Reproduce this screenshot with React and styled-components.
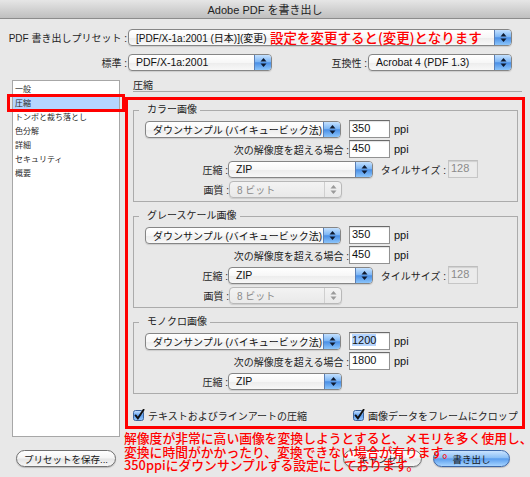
import React from "react";
import styled, { createGlobalStyle } from "styled-components";

const UI = `"Liberation Sans", "Noto Sans CJK JP", sans-serif`;
const JP = `"Noto Sans CJK JP", "Liberation Sans", sans-serif`;

const Global = createGlobalStyle`
  html, body { margin: 0; padding: 0; background: #e8e8e8; }
  body { font-family: ${UI}; }
`;

const Window = styled.div`
  position: relative;
  width: 530px;
  height: 477px;
  overflow: hidden;
  background: #e8e8e8;
  display: flex;
  flex-direction: column;
  font-family: ${UI};
  color: #1a1a1a;
`;

const TitleBar = styled.div`
  height: 19px;
  flex-shrink: 0;
  box-sizing: border-box;
  background: linear-gradient(#e6e6e6, #bfbfbf);
  border-bottom: 1px solid #8c8c8c;
  display: flex;
  align-items: center;
  justify-content: center;
  font-size: 11px;
  color: #222;
`;

const FormRow = styled.div`
  display: flex;
  align-items: center;
  height: 18px;
  margin-top: ${(p) => p.$mt}px;
  flex-shrink: 0;
`;

const Label = styled.span`
  width: ${(p) => p.$w}px;
  flex-shrink: 0;
  text-align: right;
  font-size: 10px;
  white-space: nowrap;
  color: #1e1e1e;
  margin-right: ${(p) => p.$mr || 0}px;
`;

const PopupBox = styled.div`
  display: flex;
  align-items: center;
  width: ${(p) => p.$w}px;
  height: 17px;
  flex-shrink: 0;
  box-sizing: border-box;
  border: 1px solid ${(p) => (p.$disabled ? "#b8b8b8" : "#858585")};
  border-radius: 4px;
  background: ${(p) =>
    p.$disabled
      ? "linear-gradient(#f3f3f3, #e9e9e9)"
      : "linear-gradient(#ffffff 0%, #f7f7f7 50%, #ececec 51%, #f8f8f8 100%)"};
  box-shadow: 0 1px 1px rgba(0, 0, 0, 0.12);
  overflow: hidden;
`;

const PopupText = styled.span`
  flex: 1;
  min-width: 0;
  padding-left: 7px;
  font-size: ${(p) => p.$size || 10.5}px;
  color: ${(p) => (p.$disabled ? "#8a8a8a" : "#111")};
  white-space: nowrap;
  overflow: hidden;
`;

const PopupArrows = styled.span`
  width: 16px;
  align-self: stretch;
  display: flex;
  align-items: center;
  justify-content: center;
  border-left: 1px solid ${(p) => (p.$disabled ? "#cfcfcf" : "#5a7fb6")};
  background: ${(p) =>
    p.$disabled
      ? "transparent"
      : "linear-gradient(#c4e1ff 0%, #7db6f5 45%, #4a8fe6 52%, #8cc5fb 100%)"};
`;

const Arrows = ({ color }) => (
  <svg width="7" height="11" viewBox="0 0 7 11">
    <path d="M0.5 4.5 L3.5 1 L6.5 4.5 Z" fill={color} />
    <path d="M0.5 6.5 L3.5 10 L6.5 6.5 Z" fill={color} />
  </svg>
);

const Popup = ({ w, children, size, disabled }) => (
  <PopupBox $w={w} $disabled={disabled}>
    <PopupText $size={size} $disabled={disabled}>
      {children}
    </PopupText>
    <PopupArrows $disabled={disabled}>
      <Arrows color={disabled ? "#9a9a9a" : "#0e1a30"} />
    </PopupArrows>
  </PopupBox>
);

const Field = styled.div`
  width: ${(p) => p.$w}px;
  height: 18px;
  flex-shrink: 0;
  box-sizing: border-box;
  border: 1px solid ${(p) => (p.$disabled ? "#c6c6c6" : "#929292")};
  border-top-color: ${(p) => (p.$disabled ? "#bdbdbd" : "#6a6a6a")};
  background: ${(p) => (p.$disabled ? "#ebebeb" : "#fff")};
  box-shadow: inset 0 1px 1px rgba(0, 0, 0, 0.12);
  font-size: 11px;
  line-height: 15px;
  padding: 0 2px;
  color: ${(p) => (p.$disabled ? "#8a8a8a" : "#111")};
  margin-left: ${(p) => p.$ml || 0}px;
`;

const Selected = styled.span`
  background: #b5d5ff;
`;

const Unit = styled.span`
  font-size: 11px;
  margin-left: 4px;
  color: #111;
`;

const Content = styled.div`
  display: flex;
  margin-top: 9px;
  height: 357px;
  flex-shrink: 0;
`;

const Sidebar = styled.div`
  width: 108px;
  margin-left: 12px;
  box-sizing: border-box;
  background: #fff;
  border: 1px solid #a7a7a7;
  padding-top: 1px;
  display: flex;
  flex-direction: column;
`;

const SideItem = styled.div`
  height: 14px;
  line-height: 14px;
  font-size: 8px;
  padding-left: 2px;
  font-family: ${JP};
  color: #2a2a2a;
  background: ${(p) => (p.$selected ? "#b5d5ff" : "transparent")};
`;

const Main = styled.div`
  width: 389px;
  margin-left: 13px;
  display: flex;
  flex-direction: column;
`;

const MainHeader = styled.div`
  height: 11px;
  line-height: 11px;
  font-size: 10px;
  border-bottom: 1px solid #a9a9a9;
  color: #222;
`;

const Group = styled.fieldset`
  margin: ${(p) => (p.$first ? 12 : 8)}px 4px 0 0;
  padding: 4px 0 3px 11px;
  border: 1px solid #ababab;
  min-width: 0;
  display: flex;
  flex-direction: column;
  gap: 2px;
`;

const Legend = styled.legend`
  margin-left: -6px;
  padding: 0 3px 0 8px;
  font-size: 10px;
  line-height: 12px;
  color: #222;
`;

const Row = styled.div`
  display: flex;
  align-items: center;
  height: 18px;
`;

const CheckRow = styled.div`
  display: flex;
  align-items: center;
  height: 14px;
  margin-top: 14px;
`;

const CheckItem = styled.label`
  display: flex;
  align-items: center;
  gap: 3px;
  width: ${(p) => (p.$w ? `${p.$w}px` : "auto")};
  font-size: 10px;
  color: #1e1e1e;
  white-space: nowrap;
`;

const CheckBox = () => (
  <svg width="12" height="12" viewBox="0 0 12 12">
    <defs>
      <linearGradient id="cbg" x1="0" y1="0" x2="0" y2="1">
        <stop offset="0" stopColor="#cde5ff" />
        <stop offset="0.5" stopColor="#5d9ff0" />
        <stop offset="1" stopColor="#98cafc" />
      </linearGradient>
    </defs>
    <rect x="0.5" y="1.5" width="10" height="10" rx="2" fill="url(#cbg)" stroke="#3e659c" />
    <path d="M2.6 6.4 L4.9 9.3 L10.6 0.8" stroke="#101010" strokeWidth="1.9" fill="none" strokeLinecap="round" />
  </svg>
);

const Footer = styled.div`
  display: flex;
  align-items: center;
  margin-top: 13px;
  padding: 0 20px 0 16px;
`;

const PushButton = styled.div`
  width: ${(p) => p.$w}px;
  height: 17px;
  box-sizing: border-box;
  border-radius: 9px;
  border: 1px solid ${(p) => (p.$primary ? "#3d67a8" : "#707070")};
  background: ${(p) =>
    p.$primary
      ? "linear-gradient(#c9e3ff 0%, #8cc0f6 45%, #5a9ded 52%, #a6d4ff 100%)"
      : "linear-gradient(#ffffff 0%, #f4f4f4 48%, #e4e4e4 52%, #f6f6f6 100%)"};
  box-shadow: 0 1px 1px rgba(0, 0, 0, 0.2);
  display: flex;
  align-items: center;
  justify-content: center;
  font-size: 9.5px;
  color: #151515;
  margin-left: ${(p) => (p.$auto ? "auto" : `${p.$ml || 0}px`)};
`;

const RedFrame = styled.div`
  position: absolute;
  left: ${(p) => p.$x}px;
  top: ${(p) => p.$y}px;
  width: ${(p) => p.$w}px;
  height: ${(p) => p.$h}px;
  box-sizing: border-box;
  border: 3px solid #ff0000;
  pointer-events: none;
`;

const RedNote = styled.div`
  position: absolute;
  left: ${(p) => p.$x}px;
  top: ${(p) => p.$y}px;
  font-family: ${JP};
  font-size: ${(p) => p.$size}px;
  line-height: ${(p) => p.$lh}px;
  font-weight: 500;
  color: #ff0000;
  white-space: nowrap;
`;

const DownsampleGroup = ({ title, first, res, over, selected, quality = true }) => (
  <Group $first={first}>
    <Legend>{title}</Legend>
    <Row>
      <Popup w={196} size={10}>ダウンサンプル (バイキュービック法)</Popup>
      <Field $w={41} $ml={8}>{selected ? <Selected>{res}</Selected> : res}</Field>
      <Unit>ppi</Unit>
    </Row>
    <Row>
      <Label $w={204}>次の解像度を超える場合 :</Label>
      <Field $w={41}>{over}</Field>
      <Unit>ppi</Unit>
    </Row>
    <Row>
      <Label $w={83}>圧縮 :</Label>
      <Popup w={quality ? 145 : 114}>ZIP</Popup>
      {quality && (
        <>
          <Label $w={73}>タイルサイズ :</Label>
          <Field $w={30} $ml={2} $disabled>128</Field>
        </>
      )}
    </Row>
    {quality && (
      <Row>
        <Label $w={84}>画質 :</Label>
        <Popup w={113} size={10} disabled>8 ビット</Popup>
      </Row>
    )}
  </Group>
);

export default function App() {
  const items = ["一般", "圧縮", "トンボと裁ち落とし", "色分解", "詳細", "セキュリティ", "概要"];
  return (
    <>
      <Global />
      <Window>
        <TitleBar>Adobe PDF を書き出し</TitleBar>
        <FormRow $mt={9}>
          <Label $w={127} $mr={1}>PDF 書き出しプリセット :</Label>
          <Popup w={384} size={10}>[PDF/X-1a:2001 (日本)](変更)</Popup>
        </FormRow>
        <FormRow $mt={7}>
          <Label $w={127} $mr={1}>標準 :</Label>
          <Popup w={144}>PDF/X-1a:2001</Popup>
          <Label $w={95} $mr={1}>互換性 :</Label>
          <Popup w={144}>Acrobat 4 (PDF 1.3)</Popup>
        </FormRow>
        <Content>
          <Sidebar>
            {items.map((it) => (
              <SideItem key={it} $selected={it === "圧縮"}>{it}</SideItem>
            ))}
          </Sidebar>
          <Main>
            <MainHeader>圧縮</MainHeader>
            <DownsampleGroup title="カラー画像" first res="350" over="450" />
            <DownsampleGroup title="グレースケール画像" res="350" over="450" />
            <DownsampleGroup title="モノクロ画像" res="1200" over="1800" selected quality={false} />
            <CheckRow>
              <CheckItem $w={220}>
                <CheckBox />
                テキストおよびラインアートの圧縮
              </CheckItem>
              <CheckItem>
                <CheckBox />
                画像データをフレームにクロップ
              </CheckItem>
            </CheckRow>
          </Main>
        </Content>
        <Footer>
          <PushButton $w={100}>プリセットを保存...</PushButton>
          <PushButton $w={79} $auto>キャンセル</PushButton>
          <PushButton $w={77} $ml={11} $primary>書き出し</PushButton>
        </Footer>

        <RedFrame $x={7} $y={94} $w={118} $h={18} />
        <RedFrame $x={125} $y={97} $w={400} $h={332} />
        <RedNote $x={270} $y={28} $size={13.5} $lh={18}>
          設定を変更すると(変更)となります
        </RedNote>
        <RedNote $x={124} $y={431} $size={12.8} $lh={13.5}>
          解像度が非常に高い画像を変換しようとすると、メモリを多く使用し、
          <br />
          変換に時間がかかったり、変換できない場合が有ります。
          <br />
          350ppiにダウンサンプルする設定にしております。
        </RedNote>
      </Window>
    </>
  );
}
